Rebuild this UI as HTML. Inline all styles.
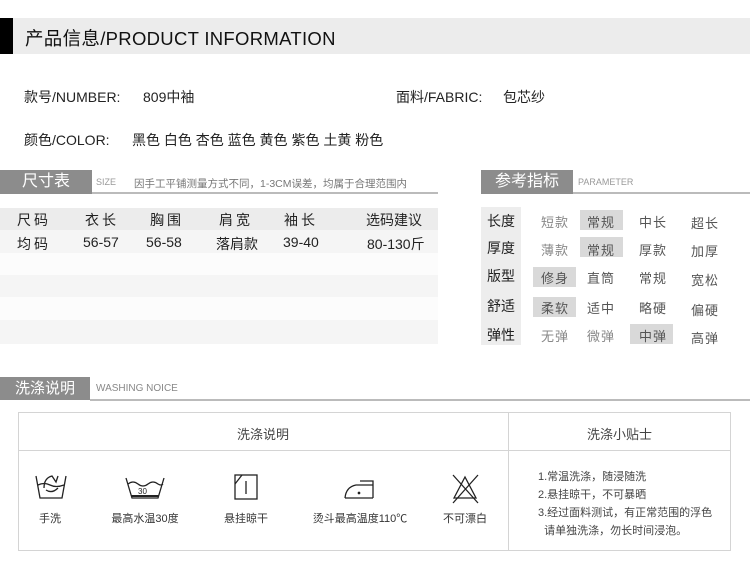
<!DOCTYPE html>
<html><head><meta charset="utf-8"><style>
*{margin:0;padding:0;box-sizing:border-box}
body{width:750px;height:570px;background:#fff;position:relative;overflow:hidden;font-family:"Liberation Sans","Noto Sans CJK SC",sans-serif;color:#222}
.a{position:absolute;white-space:nowrap}
.box{position:absolute;background:#8c8c8c;color:#fff;text-align:center}
.c{position:absolute;text-align:center;white-space:nowrap}
.g{color:#888}
.hl{position:absolute;background:#d9d9d9}
.lbl{position:absolute;font-size:11px;color:#333;text-align:center;white-space:nowrap}
</style></head><body>
<div class="a" style="left:0;top:18px;width:750px;height:36px;background:#ececec"></div>
<div class="a" style="left:0;top:18px;width:13px;height:36px;background:#000"></div>
<div class="a" style="left:25px;top:25px;font-size:18.5px;color:#111;letter-spacing:0.3px">产品信息/PRODUCT INFORMATION</div>

<div class="a" style="left:24px;top:87px;font-size:14px">款号/NUMBER:</div>
<div class="a" style="left:143px;top:87px;font-size:14px">809中袖</div>
<div class="a" style="left:396px;top:87px;font-size:14px">面料/FABRIC:</div>
<div class="a" style="left:503px;top:87px;font-size:14px">包芯纱</div>
<div class="a" style="left:24px;top:130px;font-size:14px">颜色/COLOR:</div>
<div class="a" style="left:132px;top:130px;font-size:14px">黑色 白色 杏色 蓝色 黄色 紫色 土黄 粉色</div>

<!-- size table -->
<div class="box" style="left:0;top:170px;width:92px;height:24px;font-size:16px;line-height:24px">尺寸表</div>
<div class="a" style="left:92px;top:192px;width:346px;height:2px;background:#bbb"></div>
<div class="a g" style="left:96px;top:177px;font-size:9px;color:#999">SIZE</div>
<div class="a" style="left:134px;top:176px;font-size:10.5px;color:#777">因手工平铺测量方式不同，1-3CM误差，均属于合理范围内</div>
<div class="a" style="left:0;top:208px;width:438px;height:22px;background:#ececec"></div>
<div class="a" style="left:0;top:230px;width:438px;height:23px;background:#f5f5f5"></div>
<div class="a" style="left:0;top:253px;width:438px;height:22px;background:#fcfcfc"></div>
<div class="a" style="left:0;top:275px;width:438px;height:22px;background:#f5f5f5"></div>
<div class="a" style="left:0;top:297px;width:438px;height:23px;background:#fcfcfc"></div>
<div class="a" style="left:0;top:320px;width:438px;height:24px;background:#f5f5f5"></div>
<div class="a" style="left:17px;top:210px;font-size:14px;letter-spacing:3px">尺码</div>
<div class="a" style="left:85px;top:210px;font-size:14px;letter-spacing:3px">衣长</div>
<div class="a" style="left:150px;top:210px;font-size:14px;letter-spacing:3px">胸围</div>
<div class="a" style="left:219px;top:210px;font-size:14px;letter-spacing:3px">肩宽</div>
<div class="a" style="left:284px;top:210px;font-size:14px;letter-spacing:3px">袖长</div>
<div class="a" style="left:366px;top:210px;font-size:14px">选码建议</div>
<div class="a" style="left:17px;top:234px;font-size:14px;letter-spacing:3px">均码</div>
<div class="a" style="left:83px;top:234px;font-size:14px">56-57</div>
<div class="a" style="left:146px;top:234px;font-size:14px">56-58</div>
<div class="a" style="left:216px;top:234px;font-size:14px">落肩款</div>
<div class="a" style="left:283px;top:234px;font-size:14px">39-40</div>
<div class="a" style="left:367px;top:234px;font-size:14px">80-130斤</div>

<!-- parameter -->
<div class="box" style="left:481px;top:170px;width:92px;height:24px;font-size:16px;line-height:24px">参考指标</div>
<div class="a" style="left:573px;top:192px;width:177px;height:2px;background:#bbb"></div>
<div class="a" style="left:578px;top:177px;font-size:9px;color:#999">PARAMETER</div>
<div class="a" style="left:481px;top:207px;width:40px;height:138px;background:#ededed"></div>
<div class="hl" style="left:580px;top:210px;width:43px;height:20px"></div>
<div class="hl" style="left:580px;top:237px;width:43px;height:20px"></div>
<div class="hl" style="left:533px;top:267px;width:43px;height:20px"></div>
<div class="hl" style="left:533px;top:297px;width:43px;height:20px"></div>
<div class="hl" style="left:630px;top:324px;width:43px;height:20px"></div>
<div class="a" style="left:487px;top:211px;font-size:14px">长度</div>
<div class="a" style="left:487px;top:238px;font-size:14px">厚度</div>
<div class="a" style="left:487px;top:266px;font-size:14px">版型</div>
<div class="a" style="left:487px;top:296px;font-size:14px">舒适</div>
<div class="a" style="left:487px;top:325px;font-size:14px">弹性</div>
<div class="a g" style="left:541px;top:212px;font-size:13px;letter-spacing:1px">短款</div>
<div class="a" style="left:587px;top:212px;font-size:13px;color:#555;letter-spacing:1px">常规</div>
<div class="a" style="left:639px;top:212px;font-size:13px;color:#555;letter-spacing:1px">中长</div>
<div class="a" style="left:691px;top:213px;font-size:13px;color:#555;letter-spacing:1px">超长</div>
<div class="a g" style="left:541px;top:240px;font-size:13px;letter-spacing:1px">薄款</div>
<div class="a" style="left:587px;top:240px;font-size:13px;color:#555;letter-spacing:1px">常规</div>
<div class="a" style="left:639px;top:240px;font-size:13px;color:#555;letter-spacing:1px">厚款</div>
<div class="a" style="left:691px;top:241px;font-size:13px;color:#555;letter-spacing:1px">加厚</div>
<div class="a" style="left:541px;top:268px;font-size:13px;color:#555;letter-spacing:1px">修身</div>
<div class="a" style="left:587px;top:268px;font-size:13px;color:#555;letter-spacing:1px">直筒</div>
<div class="a" style="left:639px;top:268px;font-size:13px;color:#555;letter-spacing:1px">常规</div>
<div class="a" style="left:691px;top:270px;font-size:13px;color:#555;letter-spacing:1px">宽松</div>
<div class="a" style="left:541px;top:298px;font-size:13px;color:#555;letter-spacing:1px">柔软</div>
<div class="a" style="left:587px;top:298px;font-size:13px;color:#555;letter-spacing:1px">适中</div>
<div class="a" style="left:639px;top:298px;font-size:13px;color:#555;letter-spacing:1px">略硬</div>
<div class="a" style="left:691px;top:300px;font-size:13px;color:#555;letter-spacing:1px">偏硬</div>
<div class="a g" style="left:541px;top:326px;font-size:13px;letter-spacing:1px">无弹</div>
<div class="a g" style="left:587px;top:326px;font-size:13px;letter-spacing:1px">微弹</div>
<div class="a" style="left:639px;top:326px;font-size:13px;color:#555;letter-spacing:1px">中弹</div>
<div class="a" style="left:691px;top:328px;font-size:13px;color:#555;letter-spacing:1px">高弹</div>

<!-- washing -->
<div class="box" style="left:0;top:377px;width:90px;height:23px;font-size:15px;line-height:23px">洗涤说明</div>
<div class="a" style="left:90px;top:399px;width:660px;height:2px;background:#bbb"></div>
<div class="a" style="left:96px;top:383px;font-size:10px;color:#888">WASHING NOICE</div>
<div class="a" style="left:18px;top:412px;width:713px;height:139px;border:1px solid #d4d4d4"></div>
<div class="a" style="left:508px;top:412px;width:1px;height:139px;background:#d4d4d4"></div>
<div class="a" style="left:18px;top:450px;width:713px;height:1px;background:#d4d4d4"></div>
<div class="c" style="left:18px;top:424px;width:490px;font-size:13px;color:#444">洗涤说明</div>
<div class="c" style="left:508px;top:424px;width:223px;font-size:13px;color:#444">洗涤小贴士</div>
<div class="a" style="left:538px;top:468px;font-size:11px;color:#444;line-height:18px;white-space:normal">1.常温洗涤，随浸随洗<br>2.悬挂晾干，不可暴晒<br>3.经过面料测试，有正常范围的浮色<br>&nbsp;&nbsp;请单独洗涤，勿长时间浸泡。</div>

<svg class="a" style="left:0;top:460px" width="508" height="50" viewBox="0 460 508 50" fill="none" stroke="#222" stroke-width="1.3">
<path d="M36 476 L40 498 L62 498 L66 476"/>
<path d="M38 485 Q44 482 50 485 Q56 488 64 485"/>
<path d="M44 488 Q44 478 52 476 L56 482 L58 476 M46 490 Q52 494 58 488"/>
<path d="M126 478 L132 498 L158 498 L164 478"/>
<path d="M128 484 Q133 480 138 484 Q143 488 148 484 Q153 480 158 484 Q161 486 163 484"/>
<line x1="131" y1="496" x2="159" y2="496" stroke-width="2"/>
<text x="138" y="494" font-size="8" fill="#222" stroke="none" font-family="Liberation Sans">30</text>
<rect x="235" y="475" width="22" height="24"/>
<path d="M235 484 L242 475"/>
<line x1="246" y1="481" x2="246" y2="494"/>
<path d="M345 498 Q346 487 356 485 L373 485 M345 498 L373 498 M360 481 L373 481 L373 498"/>
<circle cx="359" cy="493" r="0.7" fill="#222"/>
<path d="M454 498 L465 477 L476 498 Z"/>
<path d="M453 475 L478 503 M478 475 L453 503"/>
</svg>
<div class="lbl" style="left:30px;top:510px;width:40px">手洗</div>
<div class="lbl" style="left:100px;top:510px;width:90px">最高水温30度</div>
<div class="lbl" style="left:216px;top:510px;width:60px">悬挂晾干</div>
<div class="lbl" style="left:305px;top:510px;width:110px">烫斗最高温度110℃</div>
<div class="lbl" style="left:435px;top:510px;width:60px">不可漂白</div>
</body></html>
